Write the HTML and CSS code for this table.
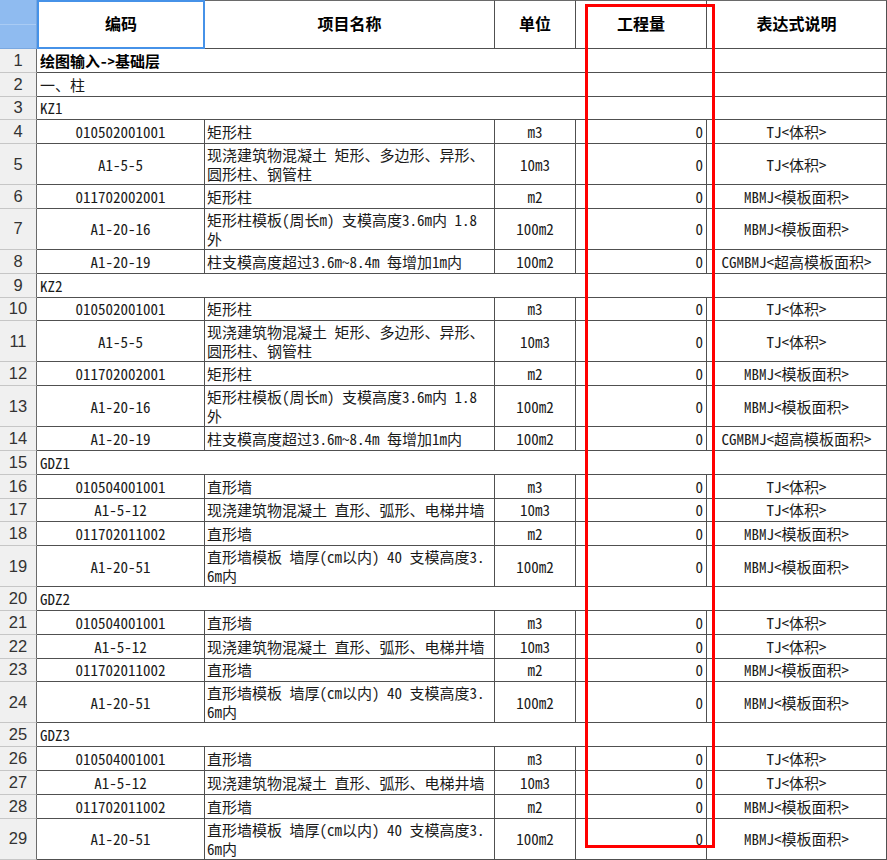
FILE: index.html
```html
<!DOCTYPE html>
<html lang="zh-CN">
<head>
<meta charset="utf-8">
<title>工程量表</title>
<link rel="stylesheet" href="styles.css">
</head>
<body>
<div class="sheet">
  <div class="row head">
    <div class="cell corner"><div class="corner-top"></div><div class="corner-bottom"></div></div>
    <div class="cell hcell selected">编码</div>
    <div class="cell hcell">项目名称</div>
    <div class="cell hcell">单位</div>
    <div class="cell hcell">工程量</div>
    <div class="cell hcell">表达式说明</div>
  </div>

  <div class="row"><div class="cell num">1</div><div class="cell group bold">绘图输入-&gt;基础层</div></div>
  <div class="row"><div class="cell num">2</div><div class="cell group">一、柱</div></div>
  <div class="row"><div class="cell num">3</div><div class="cell group">KZ1</div></div>
  <div class="row"><div class="cell num">4</div><div class="cell">010502001001</div><div class="cell name">矩形柱</div><div class="cell">m3</div><div class="cell qty">0</div><div class="cell">TJ&lt;体积&gt;</div></div>
  <div class="row tall"><div class="cell num">5</div><div class="cell">A1-5-5</div><div class="cell name">现浇建筑物混凝土 矩形、多边形、异形、<br>圆形柱、钢管柱</div><div class="cell">10m3</div><div class="cell qty">0</div><div class="cell">TJ&lt;体积&gt;</div></div>
  <div class="row"><div class="cell num">6</div><div class="cell">011702002001</div><div class="cell name">矩形柱</div><div class="cell">m2</div><div class="cell qty">0</div><div class="cell">MBMJ&lt;模板面积&gt;</div></div>
  <div class="row tall"><div class="cell num">7</div><div class="cell">A1-20-16</div><div class="cell name">矩形柱模板(周长m) 支模高度3.6m内 1.8<br>外</div><div class="cell">100m2</div><div class="cell qty">0</div><div class="cell">MBMJ&lt;模板面积&gt;</div></div>
  <div class="row"><div class="cell num">8</div><div class="cell">A1-20-19</div><div class="cell name">柱支模高度超过3.6m~8.4m 每增加1m内</div><div class="cell">100m2</div><div class="cell qty">0</div><div class="cell">CGMBMJ&lt;超高模板面积&gt;</div></div>

  <div class="row"><div class="cell num">9</div><div class="cell group">KZ2</div></div>
  <div class="row"><div class="cell num">10</div><div class="cell">010502001001</div><div class="cell name">矩形柱</div><div class="cell">m3</div><div class="cell qty">0</div><div class="cell">TJ&lt;体积&gt;</div></div>
  <div class="row tall"><div class="cell num">11</div><div class="cell">A1-5-5</div><div class="cell name">现浇建筑物混凝土 矩形、多边形、异形、<br>圆形柱、钢管柱</div><div class="cell">10m3</div><div class="cell qty">0</div><div class="cell">TJ&lt;体积&gt;</div></div>
  <div class="row"><div class="cell num">12</div><div class="cell">011702002001</div><div class="cell name">矩形柱</div><div class="cell">m2</div><div class="cell qty">0</div><div class="cell">MBMJ&lt;模板面积&gt;</div></div>
  <div class="row tall"><div class="cell num">13</div><div class="cell">A1-20-16</div><div class="cell name">矩形柱模板(周长m) 支模高度3.6m内 1.8<br>外</div><div class="cell">100m2</div><div class="cell qty">0</div><div class="cell">MBMJ&lt;模板面积&gt;</div></div>
  <div class="row"><div class="cell num">14</div><div class="cell">A1-20-19</div><div class="cell name">柱支模高度超过3.6m~8.4m 每增加1m内</div><div class="cell">100m2</div><div class="cell qty">0</div><div class="cell">CGMBMJ&lt;超高模板面积&gt;</div></div>

  <div class="row"><div class="cell num">15</div><div class="cell group">GDZ1</div></div>
  <div class="row"><div class="cell num">16</div><div class="cell">010504001001</div><div class="cell name">直形墙</div><div class="cell">m3</div><div class="cell qty">0</div><div class="cell">TJ&lt;体积&gt;</div></div>
  <div class="row"><div class="cell num">17</div><div class="cell">A1-5-12</div><div class="cell name">现浇建筑物混凝土 直形、弧形、电梯井墙</div><div class="cell">10m3</div><div class="cell qty">0</div><div class="cell">TJ&lt;体积&gt;</div></div>
  <div class="row"><div class="cell num">18</div><div class="cell">011702011002</div><div class="cell name">直形墙</div><div class="cell">m2</div><div class="cell qty">0</div><div class="cell">MBMJ&lt;模板面积&gt;</div></div>
  <div class="row tall"><div class="cell num">19</div><div class="cell">A1-20-51</div><div class="cell name">直形墙模板 墙厚(cm以内) 40 支模高度3.<br>6m内</div><div class="cell">100m2</div><div class="cell qty">0</div><div class="cell">MBMJ&lt;模板面积&gt;</div></div>

  <div class="row"><div class="cell num">20</div><div class="cell group">GDZ2</div></div>
  <div class="row"><div class="cell num">21</div><div class="cell">010504001001</div><div class="cell name">直形墙</div><div class="cell">m3</div><div class="cell qty">0</div><div class="cell">TJ&lt;体积&gt;</div></div>
  <div class="row"><div class="cell num">22</div><div class="cell">A1-5-12</div><div class="cell name">现浇建筑物混凝土 直形、弧形、电梯井墙</div><div class="cell">10m3</div><div class="cell qty">0</div><div class="cell">TJ&lt;体积&gt;</div></div>
  <div class="row"><div class="cell num">23</div><div class="cell">011702011002</div><div class="cell name">直形墙</div><div class="cell">m2</div><div class="cell qty">0</div><div class="cell">MBMJ&lt;模板面积&gt;</div></div>
  <div class="row tall"><div class="cell num">24</div><div class="cell">A1-20-51</div><div class="cell name">直形墙模板 墙厚(cm以内) 40 支模高度3.<br>6m内</div><div class="cell">100m2</div><div class="cell qty">0</div><div class="cell">MBMJ&lt;模板面积&gt;</div></div>

  <div class="row"><div class="cell num">25</div><div class="cell group">GDZ3</div></div>
  <div class="row"><div class="cell num">26</div><div class="cell">010504001001</div><div class="cell name">直形墙</div><div class="cell">m3</div><div class="cell qty">0</div><div class="cell">TJ&lt;体积&gt;</div></div>
  <div class="row"><div class="cell num">27</div><div class="cell">A1-5-12</div><div class="cell name">现浇建筑物混凝土 直形、弧形、电梯井墙</div><div class="cell">10m3</div><div class="cell qty">0</div><div class="cell">TJ&lt;体积&gt;</div></div>
  <div class="row"><div class="cell num">28</div><div class="cell">011702011002</div><div class="cell name">直形墙</div><div class="cell">m2</div><div class="cell qty">0</div><div class="cell">MBMJ&lt;模板面积&gt;</div></div>
  <div class="row tall"><div class="cell num">29</div><div class="cell">A1-20-51</div><div class="cell name">直形墙模板 墙厚(cm以内) 40 支模高度3.<br>6m内</div><div class="cell">100m2</div><div class="cell qty">0</div><div class="cell">MBMJ&lt;模板面积&gt;</div></div>

  <div class="highlight"></div>
</div>
</body>
</html>
```

FILE: styles.css
```css
html, body {
  margin: 0;
  padding: 0;
  background: #ffffff;
}

.sheet {
  position: relative;
  width: 887px;
}

.row {
  display: grid;
  grid-template-columns: 37px 168px 290px 81px 131px 180px;
  height: 23.8px;
}

.row.tall {
  height: 41px;
}

.row.head {
  height: 49px;
}

.cell {
  box-sizing: border-box;
  border-right: 1px solid #505050;
  border-bottom: 1px solid #505050;
  display: flex;
  align-items: center;
  justify-content: center;
  font-family: "Noto Sans Mono CJK SC", "Noto Sans CJK SC", monospace;
  font-size: 15px;
  line-height: 19px;
  color: #1a1a1a;
  white-space: nowrap;
  overflow: hidden;
}

.name {
  justify-content: flex-start;
  padding-left: 2px;
}

.qty {
  justify-content: flex-end;
  padding-right: 3px;
}

.num {
  background: #f0f0f0;
  border-bottom-color: #c6c6c6;
  border-right-color: #6a6a6a;
  color: #333;
  font-family: "Liberation Sans Narrow", "Liberation Sans", sans-serif;
  font-size: 16.5px;
}

.group {
  grid-column: 2 / -1;
  justify-content: flex-start;
  padding-left: 3px;
}

.bold {
  font-weight: bold;
  color: #000;
}

.hcell {
  border-top: 1px solid #6a6a6a;
  font-family: "Noto Sans CJK SC", sans-serif;
  font-weight: bold;
  font-size: 16px;
  color: #000;
  padding-bottom: 3px;
}

.hcell.selected {
  border: 2px solid #4692e8;
}

.corner {
  display: flex;
  flex-direction: column;
  align-items: stretch;
  background: #8fbbf0;
  border-right: 1px solid #7aa8e0;
  border-bottom: 1px solid #7aa8e0;
}

.corner-top,
.corner-bottom {
  flex: 1;
}

.corner-top {
  border-bottom: 1px solid #a9cbf4;
}

.highlight {
  position: absolute;
  left: 585px;
  top: 4px;
  width: 130px;
  height: 844px;
  box-sizing: border-box;
  border: 3px solid #ff0000;
  pointer-events: none;
}
```
